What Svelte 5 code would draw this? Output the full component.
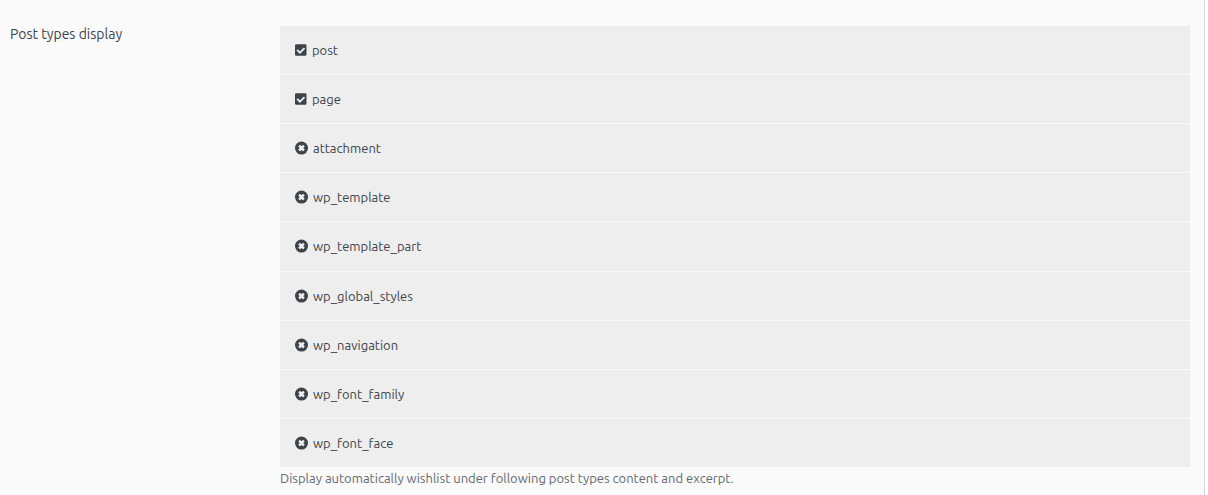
<script lang="ts">
	let postTypes = $state([
		{ name: 'post', enabled: true },
		{ name: 'page', enabled: true },
		{ name: 'attachment', enabled: false },
		{ name: 'wp_template', enabled: false },
		{ name: 'wp_template_part', enabled: false },
		{ name: 'wp_global_styles', enabled: false },
		{ name: 'wp_navigation', enabled: false },
		{ name: 'wp_font_family', enabled: false },
		{ name: 'wp_font_face', enabled: false }
	]);
</script>

<div class="panel">
	<fieldset class="field" aria-labelledby="field-title" aria-describedby="field-help">
		<div class="field-title" id="field-title">Post types display</div>
		<div class="field-body">
			<div class="options">
				{#each postTypes as type (type.name)}
					<label class="option">
						<input type="checkbox" name="post_types" value={type.name} bind:checked={type.enabled} />
						{#if type.enabled}
							<svg width="12" height="14" viewBox="0 0 12 14" aria-hidden="true">
								<rect x="0" y="1.3" width="11.5" height="11.5" rx="1.3" fill="currentColor" />
								<path d="M2.1 6.9l2.8 2.8 4.6-4.6" fill="none" stroke="#eee" stroke-width="1.8" />
							</svg>
						{:else}
							<svg width="13" height="14" viewBox="0 0 13 14" aria-hidden="true">
								<circle cx="6.5" cy="7.1" r="6.5" fill="currentColor" />
								<path d="M4.1 4.7l4.8 4.8M8.9 4.7l-4.8 4.8" stroke="#eee" stroke-width="2.5" />
							</svg>
						{/if}
						<span>{type.name}</span>
					</label>
				{/each}
			</div>
			<p class="help" id="field-help">Display automatically wishlist under following post types content and excerpt.</p>
		</div>
	</fieldset>
</div>

<style>
	:global(body) {
		background: #fff;
	}

	.panel {
		box-sizing: border-box;
		margin-right: 3px;
		padding: 26px 14px 7px 10px;
		border-right: 1px solid #d5d5d5;
		background: #fafafa;
		color: #3c434a;
		font-family: Ubuntu, 'Noto Sans', sans-serif;
		font-size: 13px;
	}

	.field {
		display: grid;
		grid-template-columns: 250px minmax(0, 1fr);
		gap: 20px;
		margin: 0;
		padding: 0;
		border: 0;
	}

	.field-title {
		font-size: 14px;
		line-height: 16px;
	}

	.options {
		display: flex;
		flex-direction: column;
		gap: 1px;
		min-height: 441px;
	}

	.option {
		display: flex;
		flex: 1;
		align-items: center;
		gap: 5px;
		min-height: 48px;
		padding: 0 15px;
		background: #eee;
		cursor: pointer;
	}

	.option svg {
		flex-shrink: 0;
	}

	/* the icon stands in for the native box */
	.option input {
		position: absolute;
		opacity: 0;
		margin: 0;
		pointer-events: none;
	}

	.option:focus-within {
		outline: 1px solid #2271b1;
	}

	.help {
		margin: 1px 0 0;
		line-height: 20px;
		color: #646970;
	}
</style>
